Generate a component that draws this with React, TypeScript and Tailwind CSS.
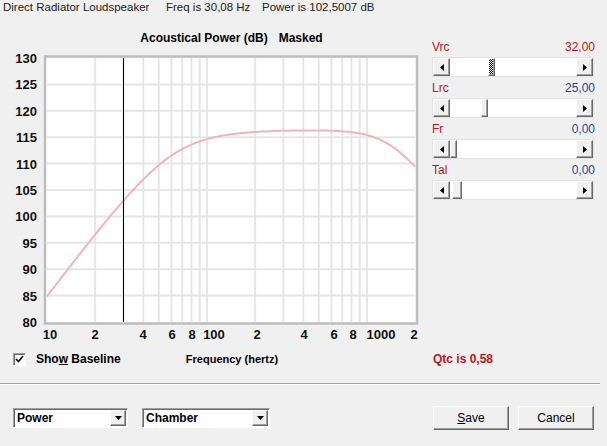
import type { ReactNode } from 'react'

const FONT = "font-['Liberation_Sans',Arial,sans-serif]"

// plot mapping (page coordinates, svg viewBox starts at page y=50)
const X0 = 47
const PX_DEC = 160
const fx = (f: number) => X0 + PX_DEC * (Math.log10(f) - 1)
const dy = (db: number) => 322 - (db - 80) * 5.28

function spl(f: number) {
  const x = f / 61
  const hp = (x * x) / Math.sqrt((1 - x * x) ** 2 + (x / 0.58) ** 2)
  const lp = 1 / Math.sqrt(1 + (f / 1413) ** 4)
  return 116.4 + 20 * Math.log10(hp * lp)
}

const curve = Array.from({ length: 221 }, (_, i) => {
  const f = 10 * Math.pow(200, i / 220)
  return `${i ? 'L' : 'M'}${fx(f).toFixed(1)},${dy(spl(f)).toFixed(1)}`
}).join(' ')

const gridF = [20, 30, 40, 50, 60, 70, 80, 90, 100, 200, 300, 400, 500, 600, 700, 800, 900, 1000]
const gridDb = [85, 90, 95, 100, 105, 110, 115, 120, 125]
const yLabels = [130, 125, 120, 115, 110, 105, 100, 95, 90, 85, 80]
const xLabels: [string, number][] = [
  ['10', 50], ['2', 95], ['4', 143], ['6', 172], ['8', 192], ['100', 214],
  ['2', 257], ['4', 304], ['6', 334], ['8', 353], ['1000', 381], ['2', 414],
]

function Chart() {
  return (
    <svg width="430" height="295" viewBox="0 50 430 295" className="block">
      <rect x="45" y="56.5" width="372" height="267" fill="#fff" stroke="#bdbdbd" strokeWidth="2.5" />
      {gridF.map((f) => (
        <line key={f} x1={fx(f)} x2={fx(f)} y1="58" y2="322" stroke="#e6e6e6" strokeWidth="2" />
      ))}
      {gridDb.map((d) => (
        <line key={d} x1="47" x2="415" y1={dy(d)} y2={dy(d)} stroke="#e6e6e6" strokeWidth="2" />
      ))}
      <path d={curve} fill="none" stroke="#f0b6b6" strokeWidth="2" />
      <line x1="123.5" x2="123.5" y1="58" y2="322" stroke="#000" strokeWidth="1" />
      <g fontFamily="'Liberation Sans', Arial, sans-serif" fontWeight="bold" fontSize="13" fill="#111">
        {yLabels.map((v) => (
          <text key={v} x="37" y={dy(v) + 5} textAnchor="end">{v}</text>
        ))}
        {xLabels.map(([t, x], i) => (
          <text key={i} x={x} y="339" textAnchor="middle">{t}</text>
        ))}
      </g>
    </svg>
  )
}

function Arrow({ dir }: { dir: 'left' | 'right' | 'down' }) {
  if (dir === 'down')
    return (
      <svg width="7" height="4" viewBox="0 0 7 4"><path d="M0 0h7L3.5 4z" fill="#000" /></svg>
    )
  return (
    <svg width="4" height="7" viewBox="0 0 4 7">
      <path d={dir === 'left' ? 'M4 0v7L0 3.5z' : 'M0 0v7l4-3.5z'} fill="#000" />
    </svg>
  )
}

const raised =
  'border border-t-white border-l-white border-r-[#696969] border-b-[#696969] bg-[#f0f0f0] shadow-[inset_-1px_-1px_0_#a0a0a0]'

function ScrollBar({ thumb, w = 7, focused }: { thumb: number; w?: number; focused?: boolean }) {
  return (
    <div className="flex h-[20px] w-[162px] border border-[#e3e3e3] bg-white">
      <div className={`flex w-[17px] items-center justify-center ${raised}`}>
        <Arrow dir="left" />
      </div>
      <div className="relative flex-1">
        <div
          className={`absolute top-0 h-full ${raised} ${
            focused ? 'bg-[repeating-conic-gradient(#000_0%_25%,#fff_0%_50%)] bg-[length:2px_2px]' : ''
          }`}
          style={{ left: thumb, width: w }}
        />
      </div>
      <div className={`flex w-[17px] items-center justify-center ${raised}`}>
        <Arrow dir="right" />
      </div>
    </div>
  )
}

function Param({ name, value, blue, children }: { name: string; value: string; blue?: boolean; children: ReactNode }) {
  return (
    <div className="flex flex-col">
      <div className="flex h-[16px] items-center justify-between text-[12px]">
        <span className="text-[#c0141c]">{name}</span>
        <span className={blue ? 'text-[#2443a4]' : 'text-[#c0141c]'}>{value}</span>
      </div>
      <div className="mt-[2px] mb-[3px]">{children}</div>
    </div>
  )
}

function Combo({ label, w }: { label: string; w: string }) {
  return (
    <div
      className={`flex h-[20px] ${w} items-center border border-t-[#a0a0a0] border-l-[#a0a0a0] border-b-white border-r-white bg-white shadow-[inset_1px_1px_0_#696969]`}
    >
      <span className="flex-1 pl-[3px] text-[12px] font-bold text-black">{label}</span>
      <div className={`mr-[1px] flex h-[16px] w-[16px] items-center justify-center ${raised}`}>
        <Arrow dir="down" />
      </div>
    </div>
  )
}

function Btn({ children }: { children: ReactNode }) {
  return (
    <div
      className={`flex h-[24px] w-[76px] items-center justify-center text-[12px] text-black ${raised} border-r-[#404040] border-b-[#404040]`}
    >
      {children}
    </div>
  )
}

export default function App() {
  return (
    <div className={`${FONT} flex h-[446px] w-[607px] flex-col overflow-hidden bg-[#f0f0f0] text-black`}>
      {/* caption */}
      <div className="flex h-[15px] items-center pl-[3px] text-[11.5px] text-[#222]">
        <span className="w-[163px] shrink-0">Direct Radiator Loudspeaker</span>
        <span className="w-[96px] shrink-0">Freq is 30,08 Hz</span>
        <span>Power is 102,5007 dB</span>
      </div>

      <div className="flex">
        <div className="flex w-[432px] flex-col pt-[16px]">
          <div className="flex h-[14px] w-[418px] items-center justify-center gap-[11px] pl-[45px] text-[12px] font-bold">
            <span>Acoustical Power (dB)</span>
            <span>Masked</span>
          </div>
          <div className="mt-[5px]">
            <Chart />
          </div>
        </div>

        <div className="flex w-[163px] flex-col pt-[24px]">
          <Param name="Vrc" value="32,00">
            <ScrollBar thumb={38} focused />
          </Param>
          <Param name="Lrc" value="25,00" blue>
            <ScrollBar thumb={31} />
          </Param>
          <Param name="Fr" value="0,00" blue>
            <ScrollBar thumb={0} />
          </Param>
          <Param name="Tal" value="0,00" blue>
            <ScrollBar thumb={2} w={10} />
          </Param>
        </div>
      </div>

      {/* options row */}
      <div className="mt-[7px] flex h-[14px] items-center text-[12px] font-bold">
        <div className="flex w-[130px] items-center pl-[13px]">
          <div className="flex h-[13px] w-[13px] items-center justify-center border border-t-[#a0a0a0] border-l-[#a0a0a0] border-b-white border-r-white bg-white shadow-[inset_1px_1px_0_#696969]">
            <svg width="9" height="9" viewBox="0 0 9 9">
              <path d="M1 4l2.5 2.5L8 1" fill="none" stroke="#000" strokeWidth="1.6" />
            </svg>
          </div>
          <span className="ml-[10px]">
            Sho<span className="underline">w</span> Baseline
          </span>
        </div>
        <div className="w-[204px] text-center text-[11px]">Frequency (hertz)</div>
        <div className="ml-[99px] text-[#c0141c]">Qtc is 0,58</div>
      </div>

      <div className="mt-[17px] h-[2px] w-[600px] border-t border-b border-t-[#a0a0a0] border-b-white" />

      <div className="mt-[21px] flex h-[24px] items-center">
        <div className="ml-[13px]">
          <Combo label="Power" w="w-[115px]" />
        </div>
        <div className="ml-[14px]">
          <Combo label="Chamber" w="w-[128px]" />
        </div>
        <div className="ml-[163px] flex gap-[9px]">
          <Btn>
            <span>
              <span className="underline">S</span>ave
            </span>
          </Btn>
          <Btn>Cancel</Btn>
        </div>
      </div>
    </div>
  )
}
